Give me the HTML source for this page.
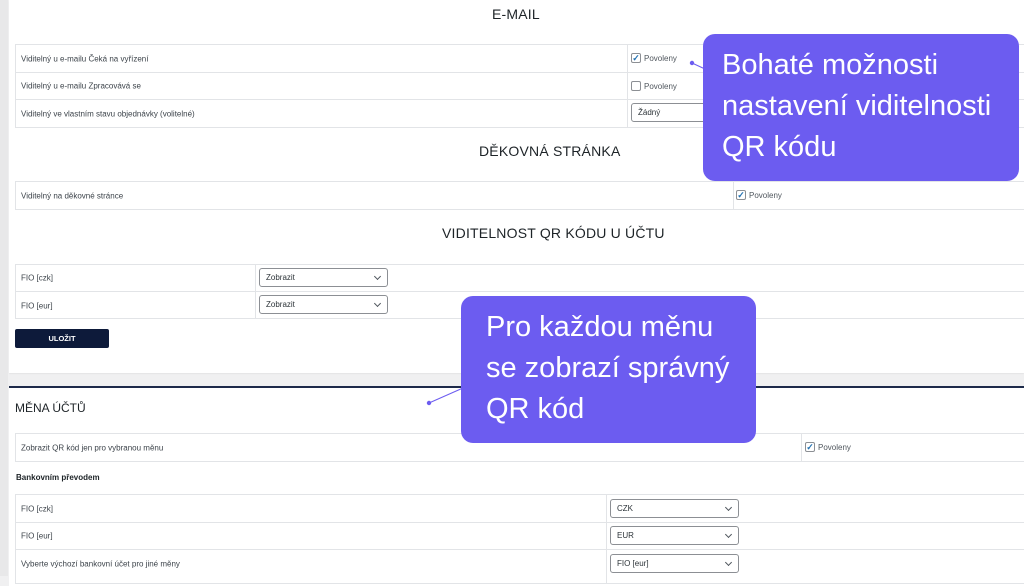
<!DOCTYPE html>
<html><head><meta charset="utf-8"><style>
*{margin:0;padding:0;box-sizing:border-box}
body{width:1024px;height:576px;overflow:hidden;background:#f0f0f1;font-family:"Liberation Sans",sans-serif;position:relative;color:#3c434a}
.abs{position:absolute}
.panel{position:absolute;background:#fff;left:9px;right:0}
.tbl{position:absolute;border:1px solid #e2e4e7;background:#fff}
.row{position:absolute;left:0;right:0;border-bottom:1px solid #e2e4e7;font-size:8px;color:#3c434a}
.row span.l{position:absolute;left:5px;top:50%;transform:translateY(-50%)}
.div{position:absolute;top:0;bottom:0;border-left:1px solid #e2e4e7}
h2{position:absolute;font-size:14px;font-weight:normal;color:#1d2327;letter-spacing:.2px}
.cb{position:absolute;font-size:8px;color:#50575e;display:flex;align-items:center;height:10px}
.cb i{display:inline-block;width:10px;height:10px;border:1px solid #8c8f94;border-radius:2px;margin-right:3px;font-style:normal;font-size:9px;line-height:9px;color:#2271b1;text-align:center;font-weight:bold}
.sel{position:absolute;border:1px solid #8c8f94;border-radius:3px;height:19px;font-size:8px;color:#2c3338;padding:4px 6px;background:#fff}
.sel:after{content:"";position:absolute;right:7px;top:5px;width:4px;height:4px;border-right:1px solid #50575e;border-bottom:1px solid #50575e;transform:rotate(45deg)}
.call{position:absolute;background:#6c5cf0;border-radius:12px;color:#fff;font-size:29px;line-height:41px;padding:11px 0 0 19px}
</style></head><body>
<div class="abs" style="left:0;top:0;width:8px;height:576px;background:#e8e8e9"></div>
<div class="panel" style="top:0;height:373px;box-shadow:0 1px 1px rgba(0,0,0,.05)"></div>
<h2 style="left:492px;top:6px">E-MAIL</h2>
<div class="tbl" style="left:15px;top:44px;width:1015px;height:84px">
 <div class="row" style="top:0;height:28px"><span class="l">Viditelný u e-mailu Čeká na vyřízení</span></div>
 <div class="row" style="top:28px;height:27px"><span class="l">Viditelný u e-mailu Zpracovává se</span></div>
 <div class="row" style="top:55px;height:28px;border:0"><span class="l">Viditelný ve vlastním stavu objednávky (volitelné)</span></div>
 <div class="div" style="left:611px"></div>
</div>
<div class="cb" style="left:631px;top:53px"><i>✓</i>Povoleny</div>
<div class="cb" style="left:631px;top:81px"><i></i>Povoleny</div>
<div class="sel" style="left:631px;top:103px;width:90px">Žádný</div>
<h2 style="left:479px;top:143px">DĚKOVNÁ STRÁNKA</h2>
<div class="tbl" style="left:15px;top:181px;width:1015px;height:29px">
 <div class="row" style="top:0;height:28px;border:0"><span class="l">Viditelný na děkovné stránce</span></div>
 <div class="div" style="left:717px"></div>
</div>
<div class="cb" style="left:736px;top:190px"><i>✓</i>Povoleny</div>
<h2 style="left:442px;top:225px">VIDITELNOST QR KÓDU U ÚČTU</h2>
<div class="tbl" style="left:15px;top:264px;width:1015px;height:55px">
 <div class="row" style="top:0;height:27px"><span class="l">FIO [czk]</span></div>
 <div class="row" style="top:27px;height:27px;border:0"><span class="l">FIO [eur]</span></div>
 <div class="div" style="left:239px"></div>
</div>
<div class="sel" style="left:259px;top:268px;width:129px">Zobrazit</div>
<div class="sel" style="left:259px;top:295px;width:129px">Zobrazit</div>
<div class="abs" style="left:15px;top:329px;width:94px;height:19px;background:#0d1a3a;border-radius:2px;color:#fff;font-size:7.5px;font-weight:bold;text-align:center;line-height:19px">ULOŽIT</div>

<div class="panel" style="top:386px;height:200px;border-top:2px solid #1d2a4a"></div>
<div class="abs" style="left:15px;top:401px;font-size:12px;color:#1d2327">MĚNA ÚČTŮ</div>
<div class="tbl" style="left:15px;top:433px;width:1015px;height:29px">
 <div class="row" style="top:0;height:28px;border:0"><span class="l">Zobrazit QR kód jen pro vybranou měnu</span></div>
 <div class="div" style="left:785px"></div>
</div>
<div class="cb" style="left:805px;top:442px"><i>✓</i>Povoleny</div>
<div class="abs" style="left:16px;top:473px;font-size:8px;font-weight:bold;color:#1d2327">Bankovním převodem</div>
<div class="tbl" style="left:15px;top:494px;width:1015px;height:90px">
 <div class="row" style="top:0;height:28px"><span class="l">FIO [czk]</span></div>
 <div class="row" style="top:28px;height:27px"><span class="l">FIO [eur]</span></div>
 <div class="row" style="top:55px;height:28px;border:0"><span class="l">Vyberte výchozí bankovní účet pro jiné měny</span></div>
 <div class="div" style="left:590px"></div>
</div>
<div class="sel" style="left:610px;top:499px;width:129px">CZK</div>
<div class="sel" style="left:610px;top:526px;width:129px">EUR</div>
<div class="sel" style="left:610px;top:554px;width:129px">FIO [eur]</div>

<svg class="abs" style="left:0;top:0" width="1024" height="576">
<line x1="692" y1="63" x2="705" y2="69" stroke="#6c5cf0" stroke-width="1"/><circle cx="692" cy="63" r="2.2" fill="#6c5cf0"/>
<line x1="429" y1="403" x2="463" y2="388" stroke="#6c5cf0" stroke-width="1"/><circle cx="429" cy="403" r="2.2" fill="#6c5cf0"/>
</svg>
<div class="call" style="left:703px;top:34px;width:316px;height:147px">Bohaté možnosti<br>nastavení viditelnosti<br>QR kódu</div>
<div class="call" style="left:461px;top:296px;width:295px;height:147px;padding-left:25px">Pro každou měnu<br>se zobrazí správný<br>QR kód</div>
</body></html>
